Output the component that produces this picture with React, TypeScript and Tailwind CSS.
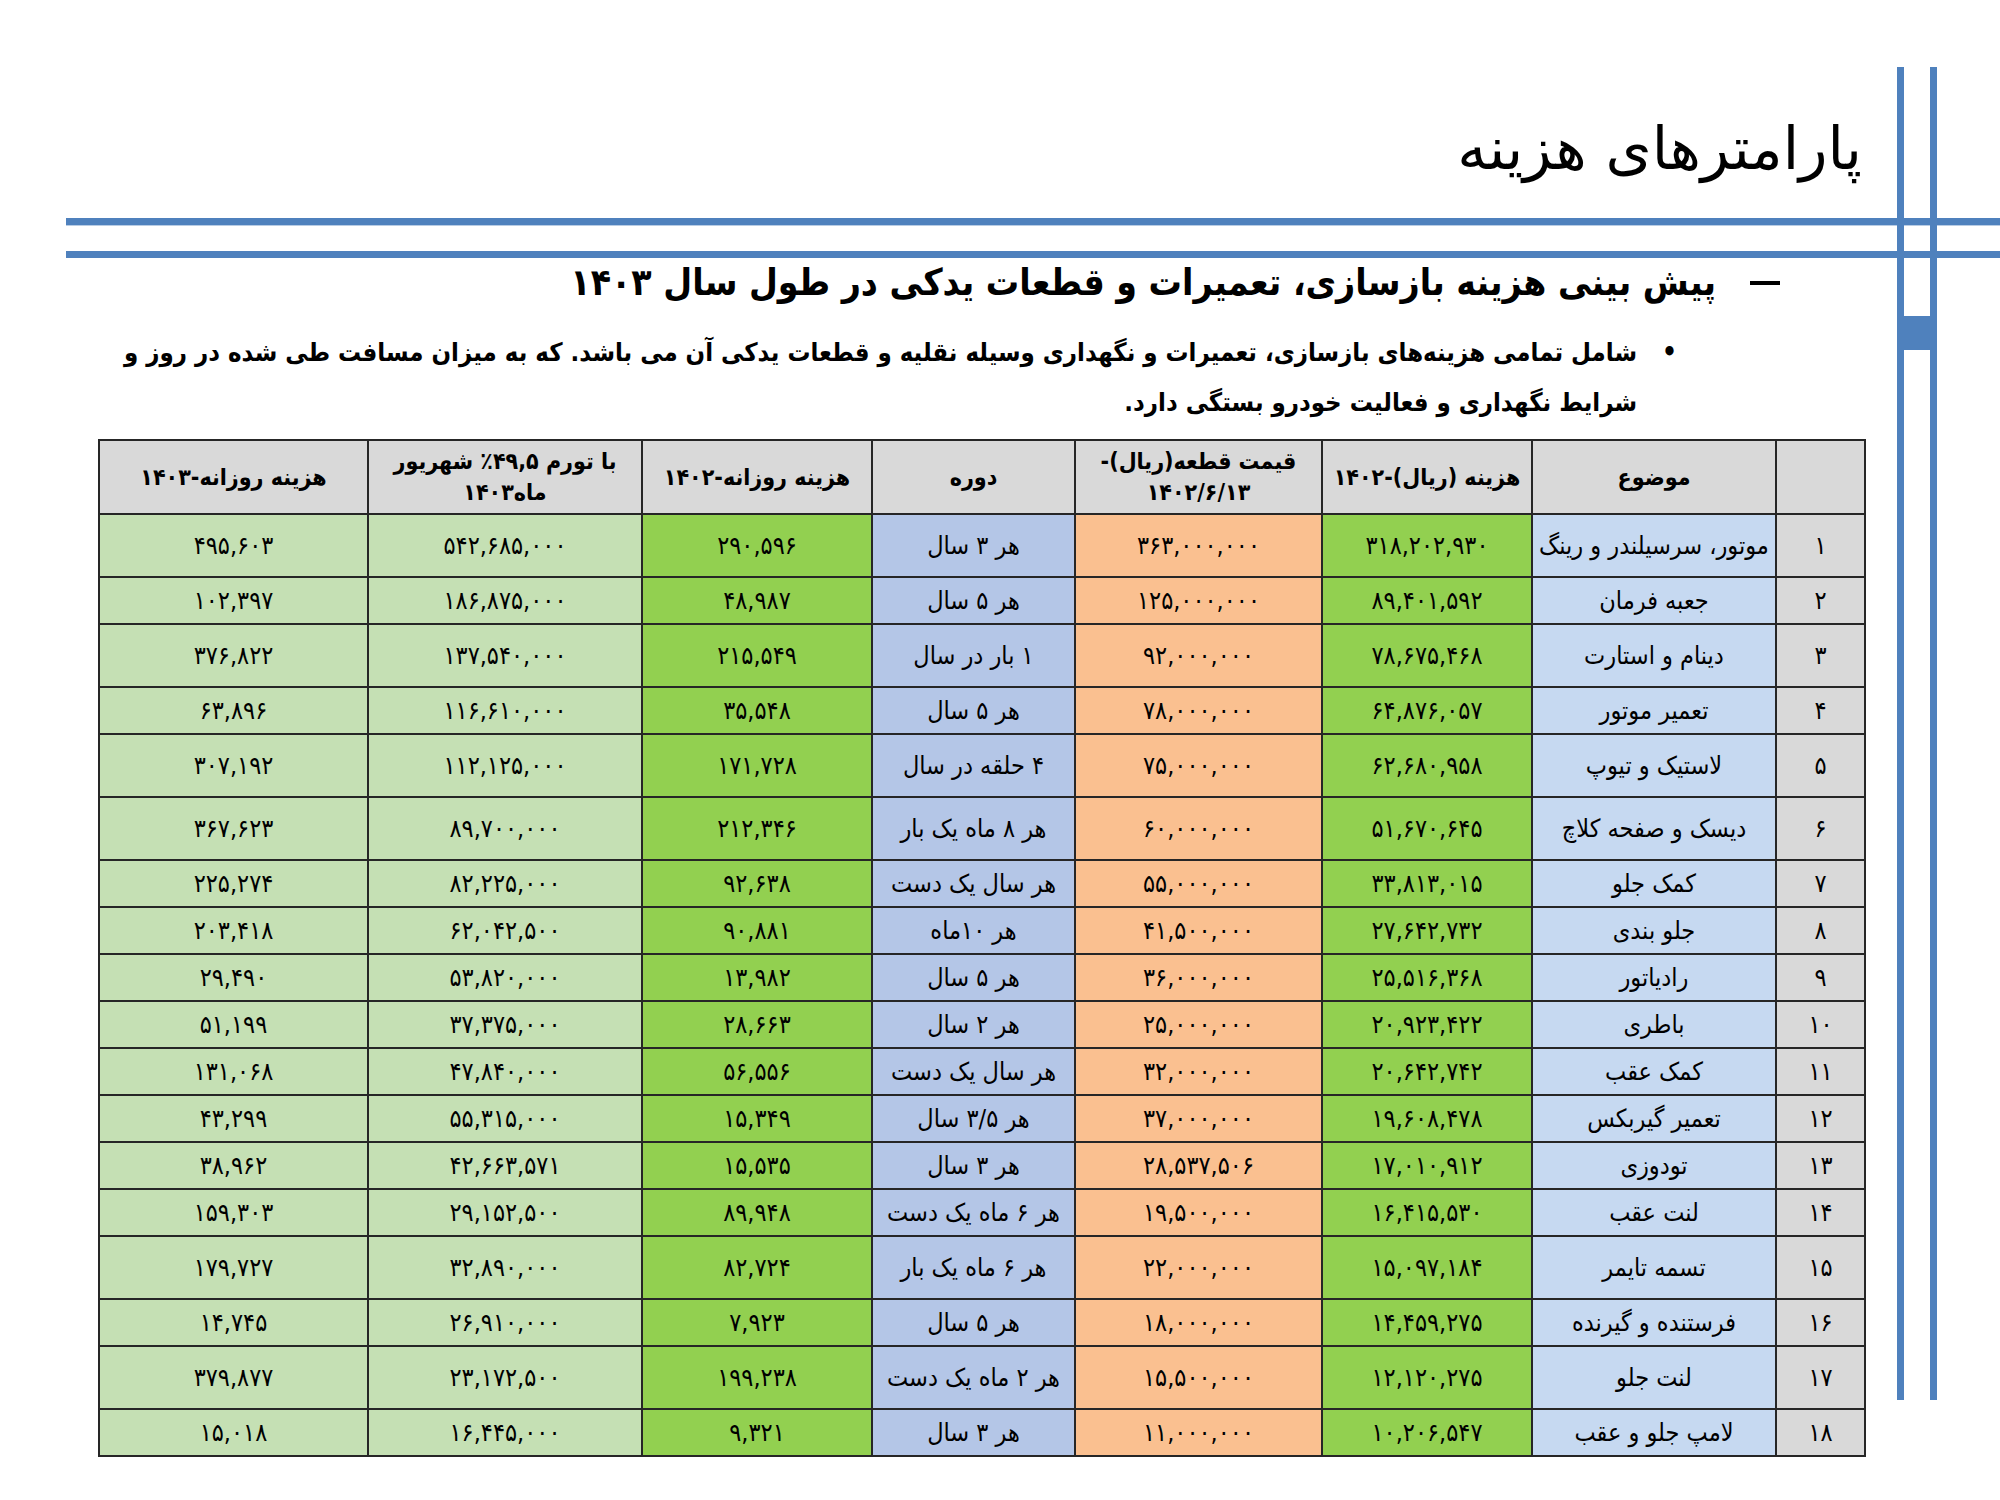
import React from "react";

type Row = {
  n: string;
  subject: string;
  cost: string;
  price: string;
  period: string;
  daily: string;
  inflated: string;
  daily03: string;
  tall?: boolean;
};

const ROWS: Row[] = [
  { n: "۱", subject: "موتور، سرسیلندر و رینگ", cost: "۳۱۸,۲۰۲,۹۳۰", price: "۳۶۳,۰۰۰,۰۰۰", period: "هر ۳ سال", daily: "۲۹۰,۵۹۶", inflated: "۵۴۲,۶۸۵,۰۰۰", daily03: "۴۹۵,۶۰۳", tall: true },
  { n: "۲", subject: "جعبه فرمان", cost: "۸۹,۴۰۱,۵۹۲", price: "۱۲۵,۰۰۰,۰۰۰", period: "هر ۵ سال", daily: "۴۸,۹۸۷", inflated: "۱۸۶,۸۷۵,۰۰۰", daily03: "۱۰۲,۳۹۷" },
  { n: "۳", subject: "دینام و استارت", cost: "۷۸,۶۷۵,۴۶۸", price: "۹۲,۰۰۰,۰۰۰", period: "۱ بار در سال", daily: "۲۱۵,۵۴۹", inflated: "۱۳۷,۵۴۰,۰۰۰", daily03: "۳۷۶,۸۲۲", tall: true },
  { n: "۴", subject: "تعمیر موتور", cost: "۶۴,۸۷۶,۰۵۷", price: "۷۸,۰۰۰,۰۰۰", period: "هر ۵ سال", daily: "۳۵,۵۴۸", inflated: "۱۱۶,۶۱۰,۰۰۰", daily03: "۶۳,۸۹۶" },
  { n: "۵", subject: "لاستیک و تیوپ", cost: "۶۲,۶۸۰,۹۵۸", price: "۷۵,۰۰۰,۰۰۰", period: "۴ حلقه در سال", daily: "۱۷۱,۷۲۸", inflated: "۱۱۲,۱۲۵,۰۰۰", daily03: "۳۰۷,۱۹۲", tall: true },
  { n: "۶", subject: "دیسک و صفحه کلاچ", cost: "۵۱,۶۷۰,۶۴۵", price: "۶۰,۰۰۰,۰۰۰", period: "هر ۸ ماه یک بار", daily: "۲۱۲,۳۴۶", inflated: "۸۹,۷۰۰,۰۰۰", daily03: "۳۶۷,۶۲۳", tall: true },
  { n: "۷", subject: "کمک جلو", cost: "۳۳,۸۱۳,۰۱۵", price: "۵۵,۰۰۰,۰۰۰", period: "هر سال یک دست", daily: "۹۲,۶۳۸", inflated: "۸۲,۲۲۵,۰۰۰", daily03: "۲۲۵,۲۷۴" },
  { n: "۸", subject: "جلو بندی", cost: "۲۷,۶۴۲,۷۳۲", price: "۴۱,۵۰۰,۰۰۰", period: "هر ۱۰ماه", daily: "۹۰,۸۸۱", inflated: "۶۲,۰۴۲,۵۰۰", daily03: "۲۰۳,۴۱۸" },
  { n: "۹", subject: "رادیاتور", cost: "۲۵,۵۱۶,۳۶۸", price: "۳۶,۰۰۰,۰۰۰", period: "هر ۵ سال", daily: "۱۳,۹۸۲", inflated: "۵۳,۸۲۰,۰۰۰", daily03: "۲۹,۴۹۰" },
  { n: "۱۰", subject: "باطری", cost: "۲۰,۹۲۳,۴۲۲", price: "۲۵,۰۰۰,۰۰۰", period: "هر ۲ سال", daily: "۲۸,۶۶۳", inflated: "۳۷,۳۷۵,۰۰۰", daily03: "۵۱,۱۹۹" },
  { n: "۱۱", subject: "کمک عقب", cost: "۲۰,۶۴۲,۷۴۲", price: "۳۲,۰۰۰,۰۰۰", period: "هر سال یک دست", daily: "۵۶,۵۵۶", inflated: "۴۷,۸۴۰,۰۰۰", daily03: "۱۳۱,۰۶۸" },
  { n: "۱۲", subject: "تعمیر گیربکس", cost: "۱۹,۶۰۸,۴۷۸", price: "۳۷,۰۰۰,۰۰۰", period: "هر ۳/۵ سال", daily: "۱۵,۳۴۹", inflated: "۵۵,۳۱۵,۰۰۰", daily03: "۴۳,۲۹۹" },
  { n: "۱۳", subject: "تودوزی", cost: "۱۷,۰۱۰,۹۱۲", price: "۲۸,۵۳۷,۵۰۶", period: "هر ۳ سال", daily: "۱۵,۵۳۵", inflated: "۴۲,۶۶۳,۵۷۱", daily03: "۳۸,۹۶۲" },
  { n: "۱۴", subject: "لنت عقب", cost: "۱۶,۴۱۵,۵۳۰", price: "۱۹,۵۰۰,۰۰۰", period: "هر ۶ ماه یک دست", daily: "۸۹,۹۴۸", inflated: "۲۹,۱۵۲,۵۰۰", daily03: "۱۵۹,۳۰۳" },
  { n: "۱۵", subject: "تسمه تایمر", cost: "۱۵,۰۹۷,۱۸۴", price: "۲۲,۰۰۰,۰۰۰", period: "هر ۶ ماه یک بار", daily: "۸۲,۷۲۴", inflated: "۳۲,۸۹۰,۰۰۰", daily03: "۱۷۹,۷۲۷", tall: true },
  { n: "۱۶", subject: "فرستنده و گیرنده", cost: "۱۴,۴۵۹,۲۷۵", price: "۱۸,۰۰۰,۰۰۰", period: "هر ۵ سال", daily: "۷,۹۲۳", inflated: "۲۶,۹۱۰,۰۰۰", daily03: "۱۴,۷۴۵" },
  { n: "۱۷", subject: "لنت جلو", cost: "۱۲,۱۲۰,۲۷۵", price: "۱۵,۵۰۰,۰۰۰", period: "هر ۲ ماه یک دست", daily: "۱۹۹,۲۳۸", inflated: "۲۳,۱۷۲,۵۰۰", daily03: "۳۷۹,۸۷۷", tall: true },
  { n: "۱۸", subject: "لامپ جلو و عقب", cost: "۱۰,۲۰۶,۵۴۷", price: "۱۱,۰۰۰,۰۰۰", period: "هر ۳ سال", daily: "۹,۳۲۱", inflated: "۱۶,۴۴۵,۰۰۰", daily03: "۱۵,۰۱۸" },
];

const cell = "border-2 border-[#262626] text-center align-middle p-0";
const num = "tracking-[1.5px]";

const App = () => {
  return (
    <div
      dir="rtl"
      className="relative w-[2000px] h-[1500px] overflow-hidden bg-white text-black font-['DejaVu_Sans_Condensed','DejaVu_Sans',sans-serif]"
    >
      {/* slide frame rules on the right */}
      <div className="absolute left-[1897px] top-[67px] h-[1333px] w-[7px] bg-[#4f81bd]" />
      <div className="absolute left-[1930px] top-[67px] h-[1333px] w-[7px] bg-[#4f81bd]" />
      <div className="absolute left-[1904px] top-[316px] h-[34px] w-[26px] bg-[#4f81bd]" />

      {/* title */}
      <div className="h-[218px] pr-[138px] pt-[114px]">
        <h1 className="text-[59px] leading-[70px] font-normal font-['DejaVu_Sans',sans-serif]">
          پارامترهای هزینه
        </h1>
      </div>

      {/* double rule */}
      <div className="ml-[66px]">
        <div className="h-[7px] bg-[#4f81bd]" />
        <div className="h-[1px] bg-[#b8cce4]" />
        <div className="h-[25px]" />
        <div className="h-[7px] bg-[#4f81bd]" />
      </div>

      {/* subtitle */}
      <div className="flex items-center pr-[220px] h-[50px]">
        <div className="w-[30px] h-[4px] bg-black" />
        <h2 className="mr-[34px] text-[37px] leading-[50px] font-bold whitespace-nowrap">
          پیش بینی هزینه بازسازی، تعمیرات و قطعات یدکی در طول سال ۱۴۰۳
        </h2>
      </div>

      {/* bullet paragraph */}
      <div className="flex pr-[323px] pt-[19px]">
        <span className="w-[40px] text-[26px] leading-[50px] font-bold">•</span>
        <div className="text-[25.5px] leading-[50px] font-bold">
          <p className="whitespace-nowrap">
            شامل تمامی هزینه‌های بازسازی، تعمیرات و نگهداری وسیله نقلیه و قطعات یدکی آن می باشد. که به میزان مسافت طی شده در روز و
          </p>
          <p className="whitespace-nowrap">شرایط نگهداری و فعالیت خودرو بستگی دارد.</p>
        </div>
      </div>

      {/* table */}
      <div className="pr-[134px] pt-[12px]">
        <table className="table-fixed border-collapse w-[1766px] text-[25px]">
          <colgroup>
            <col className="w-[89px]" />
            <col className="w-[244px]" />
            <col className="w-[210px]" />
            <col className="w-[247px]" />
            <col className="w-[203px]" />
            <col className="w-[230px]" />
            <col className="w-[274px]" />
            <col className="w-[269px]" />
          </colgroup>
          <thead>
            <tr className="h-[74px] bg-[#d9d9d9] font-bold text-[23px] leading-[31px]">
              <th className={cell}></th>
              <th className={cell}>موضوع</th>
              <th className={cell}>هزینه (ریال)-۱۴۰۲</th>
              <th className={cell}>
                قیمت قطعه(ریال)-
                <br />
                ۱۴۰۲/۶/۱۳
              </th>
              <th className={cell}>دوره</th>
              <th className={cell}>هزینه روزانه-۱۴۰۲</th>
              <th className={cell}>
                با تورم ۴۹,۵٪ شهریور
                <br />
                ماه۱۴۰۳
              </th>
              <th className={cell}>هزینه روزانه-۱۴۰۳</th>
            </tr>
          </thead>
          <tbody>
            {ROWS.map(r => (
              <tr key={r.n} className={r.tall ? "h-[63px]" : "h-[47px]"}>
                <td className={`${cell} bg-[#d9d9d9]`}>{r.n}</td>
                <td className={`${cell} bg-[#c6d9f1] whitespace-nowrap`}>{r.subject}</td>
                <td className={`${cell} ${num} bg-[#92d050]`}>{r.cost}</td>
                <td className={`${cell} ${num} bg-[#fac090]`}>{r.price}</td>
                <td className={`${cell} bg-[#b4c6e7] whitespace-nowrap`}>{r.period}</td>
                <td className={`${cell} ${num} bg-[#92d050]`}>{r.daily}</td>
                <td className={`${cell} ${num} bg-[#c5e0b4]`}>{r.inflated}</td>
                <td className={`${cell} ${num} bg-[#c5e0b4]`}>{r.daily03}</td>
              </tr>
            ))}
          </tbody>
        </table>
      </div>
    </div>
  );
};

export default App;
